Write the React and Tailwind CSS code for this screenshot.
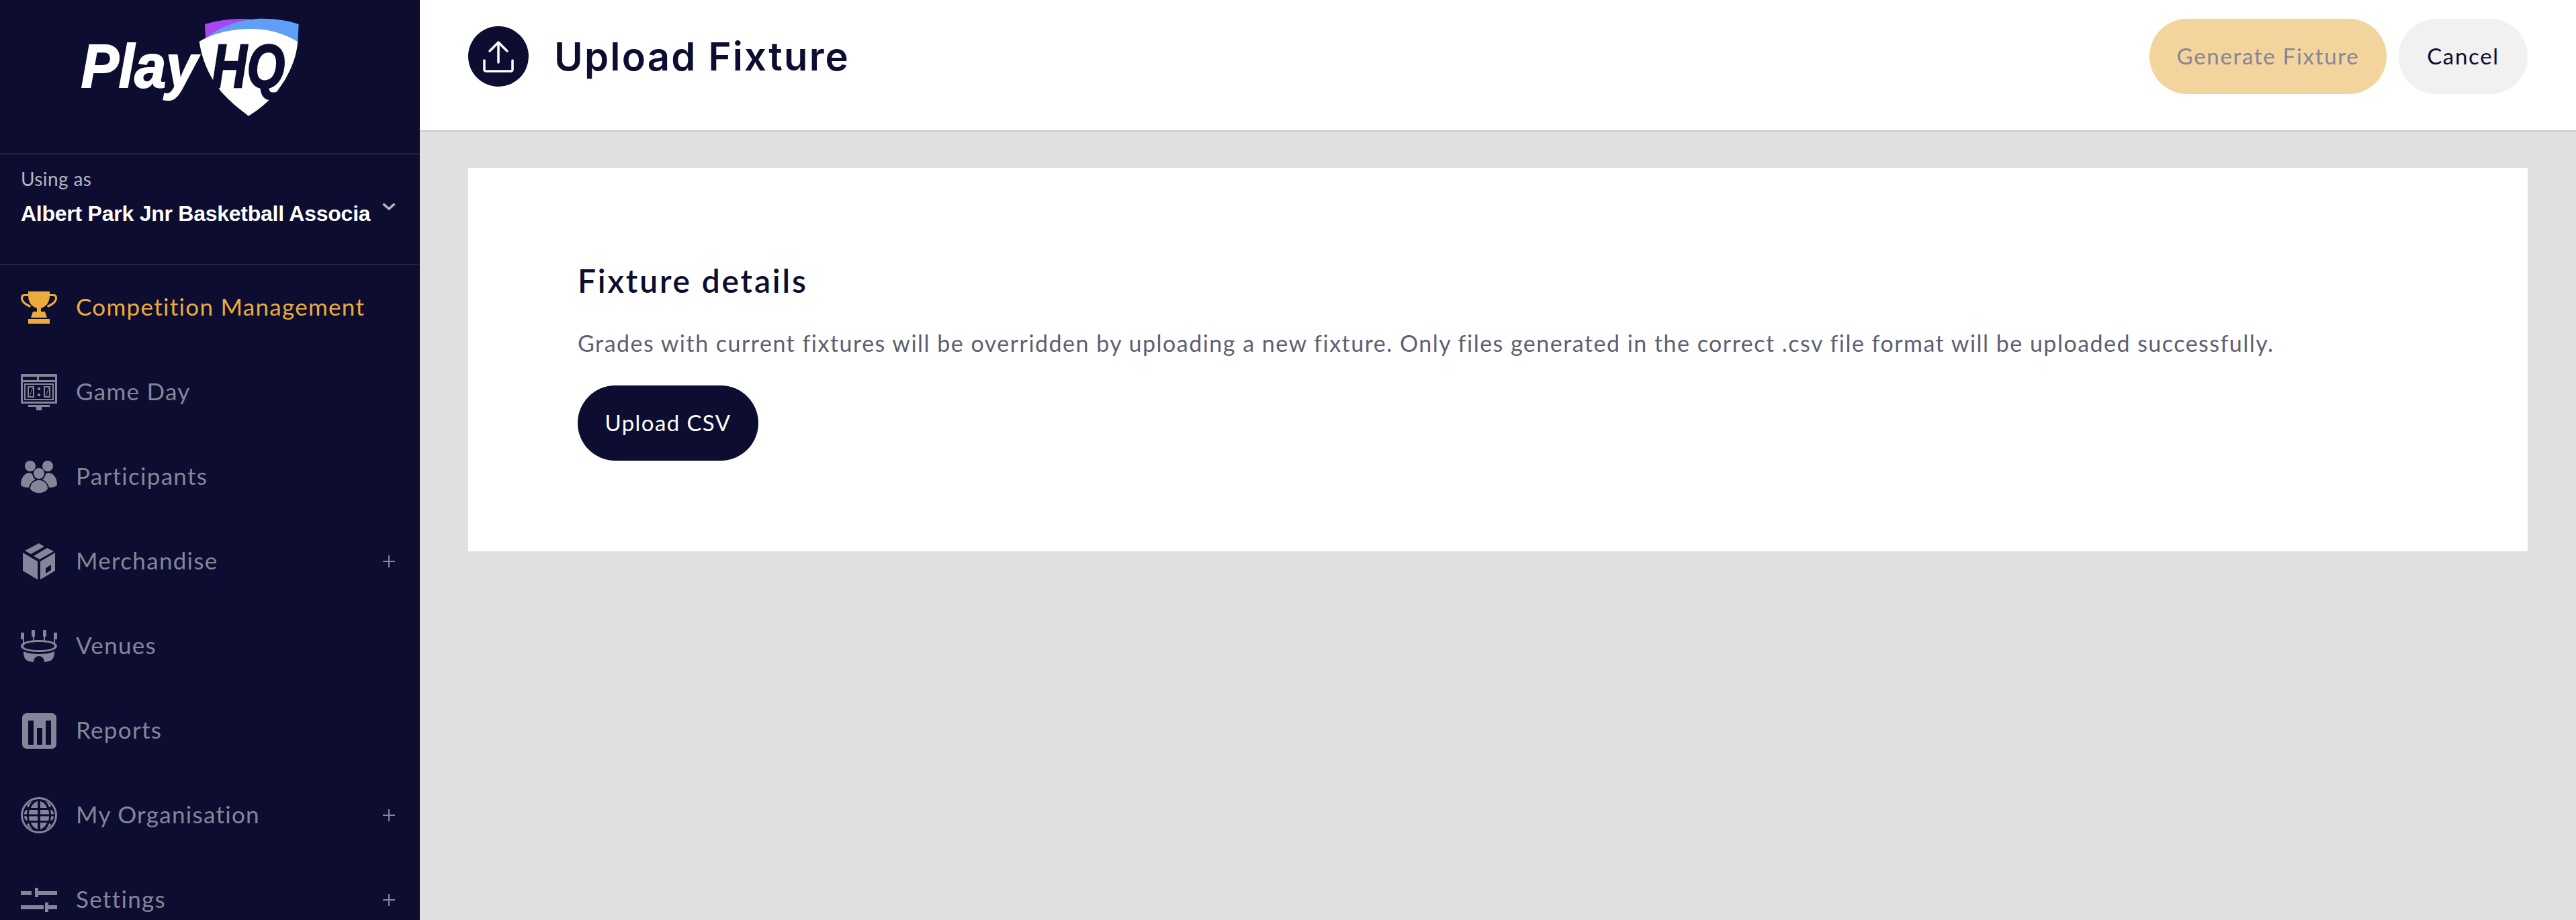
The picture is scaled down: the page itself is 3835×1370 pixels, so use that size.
const navy = '#0c0d30'

const Logo = () => (
  <svg viewBox="0 0 1140 540" className="ml-[90px] mt-[10px] h-[180px] w-[380px]">
    <path d="M645 78C710 58 790 50 850 56L850 84 648 142Z" fill="#a846f0" />
    <path d="M648 142C720 78 830 53 900 53 960 53 1020 62 1064 78L1060 158 850 100Z" fill="#5f9ff7" />
    <path
      d="M620 155C690 115 770 99 850 99 930 99 1000 120 1060 157 1055 220 1030 280 1003 326L972 372C930 425 885 460 840 488 795 455 755 420 718 380L680 325C650 275 628 215 620 155Z"
      fill="#fff"
    />
    <text x="92" y="360" fontFamily="'Liberation Sans', sans-serif" fontWeight="700" fontStyle="italic" fontSize="272" fill="#fff" stroke="#fff" strokeWidth="6" textLength="520" lengthAdjust="spacingAndGlyphs">
      Play
    </text>
    <text x="676" y="360" fontFamily="'Liberation Sans', sans-serif" fontWeight="700" fontStyle="italic" fontSize="272" fill={navy} stroke={navy} strokeWidth="8" textLength="326" lengthAdjust="spacingAndGlyphs">
      HQ
    </text>
  </svg>
)

const Trophy = () => (
  <svg viewBox="0 0 54 48" className="h-[48px] w-[54px]" fill="currentColor">
    <path d="M11 0H43V6C43 17 37 23 30 25V30H36L39 39H15L18 30H24V25C17 23 11 17 11 6Z" />
    <path d="M11 4H5C1 4 0 7 0 10 0 16 6 21 14 24L15 21C8 18 3 14 3 10 3 8 4 7 6 7H11ZM43 4H49C53 4 54 7 54 10 54 16 48 21 40 24L39 21C46 18 51 14 51 10 51 8 50 7 48 7H43Z" />
    <rect x="11" y="41" width="32" height="7" />
  </svg>
)

const Scoreboard = () => (
  <svg viewBox="0 0 54 54" className="h-[54px] w-[54px]" fill="currentColor">
    <path
      fillRule="evenodd"
      d="M1 0H53C53.5 0 54 0.5 54 1V43C54 43.5 53.5 44 53 44H1C0.5 44 0 43.5 0 43V1C0 0.5 0.5 0 1 0ZM3 4V9H24V4ZM27 4V9H51V4ZM3 12V41H51V12ZM5 14H49V39H5ZM7 16V37H47V16Z"
    />
    <path fillRule="evenodd" d="M10 18H20V35H10ZM12 20V33H18V20ZM34 18H44V35H34ZM36 20V33H42V20Z" />
    <path d="M13 32L17 21H18L14 32ZM37 32L41 21H42L38 32Z" />
    <rect x="25" y="20" width="4" height="4" />
    <rect x="25" y="29" width="4" height="4" />
    <rect x="11" y="46" width="32" height="3" />
    <rect x="23" y="49" width="8" height="5" />
  </svg>
)

const People = () => (
  <svg viewBox="0 0 54 48" className="h-[48px] w-[54px]" fill="currentColor">
    <circle cx="14" cy="8" r="8" />
    <circle cx="40" cy="8" r="8" />
    <circle cx="27" cy="19" r="8" />
    <path d="M0 36C0 26 5 19 12 18 14 18 16 19 17 20 18 24 20 27 22 28 17 30 13 35 12 40 6 40 2 39 0 36Z" />
    <path d="M54 36C54 26 49 19 42 18 40 18 38 19 37 20 36 24 34 27 32 28 37 30 41 35 42 40 48 40 52 39 54 36Z" />
    <path d="M14 42C14 34 20 29 27 29 34 29 40 34 40 42 37 46 32 48 27 48 22 48 17 46 14 42Z" />
  </svg>
)

const BoxIcon = () => (
  <svg viewBox="0 0 48 54" className="h-[54px] w-[48px]" fill="currentColor">
    <path d="M24 0L32 5 12 16 3 11ZM36 7L46 12 25 24 16 19 Z" />
    <path fillRule="evenodd" d="M0 14L22 27V54L0 41ZM48 14V41L26 54V27ZM34 37V45L42 40V32Z" />
  </svg>
)

const Stadium = () => (
  <svg viewBox="0 0 54 48" className="h-[48px] w-[54px]" fill="currentColor">
    <rect x="0" y="4" width="5" height="10" />
    <rect x="16" y="0" width="5" height="10" />
    <rect x="33" y="0" width="5" height="10" />
    <rect x="49" y="4" width="5" height="10" />
    <path d="M3 14V20H5V14ZM49 14V20H51V14ZM18 10V16H20V10ZM34 10V16H36V10Z" />
    <path fillRule="evenodd" d="M27 15C40 15 54 18 54 24 54 30 40 33 27 33 14 33 0 30 0 24 0 18 14 15 27 15ZM27 18C15 18 4 20 4 24 4 28 15 30 27 30 39 30 50 28 50 24 50 20 39 18 27 18Z" />
    <path d="M4 32C11 35 19 36 27 36 35 36 43 35 50 32 50 40 48 44 44 46 41 47 38 47.5 35 48 35 43 32 39 27 39 22 39 19 43 19 48 16 47.5 13 47 10 46 6 44 4 40 4 32Z" />
  </svg>
)

const ReportsIcon = () => (
  <svg viewBox="0 0 51 53" className="h-[53px] w-[51px]" fill="currentColor">
    <path fillRule="evenodd" d="M7 0H44C48 0 51 3 51 7V46C51 50 48 53 44 53H7C3 53 0 50 0 46V7C0 3 3 0 7 0ZM9 11V47H17V11ZM22 22V47H30V22ZM35 11V47H43V11Z" />
  </svg>
)

const Globe = () => (
  <svg viewBox="0 0 54 54" className="h-[54px] w-[54px]" fill="currentColor">
    <path fillRule="evenodd" d="M27 0A27 27 0 1 1 27 54 27 27 0 1 1 27 0ZM27 3A24 24 0 1 0 27 51 24 24 0 1 0 27 3Z" />
    <path d="M25 6C20 8 17 11 15 16H25ZM29 6V16H39C37 11 34 8 29 6ZM13 19C12 22 12 24 12 25.5H25V19ZM29 19V25.5H42C42 24 42 22 41 19ZM5 25.5C5 22 7 19 10 19 9.5 22 9 24 9 25.5ZM49 25.5C49 22 47 19 44 19 44.5 22 45 24 45 25.5ZM12 28.5C12 30 12 32 13 35H25V28.5ZM29 28.5V35H41C42 32 42 30 42 28.5ZM5 28.5H9C9 30 9.5 32 10 35 7 35 5 32 5 28.5ZM49 28.5H45C45 30 44.5 32 44 35 47 35 49 32 49 28.5ZM15 38C17 43 20 46 25 48V38ZM29 38V48C34 46 37 43 39 38ZM9 13C10 10 14 7 18 6 15 8 13 11 12 15 10.5 15 9.5 14 9 13ZM45 13C44 10 40 7 36 6 39 8 41 11 42 15 43.5 15 44.5 14 45 13ZM9 41C10 44 14 47 18 48 15 46 13 43 12 39 10.5 39 9.5 40 9 41ZM45 41C44 44 40 47 36 48 39 46 41 43 42 39 43.5 39 44.5 40 45 41Z" />
  </svg>
)

const Sliders = () => (
  <svg viewBox="0 0 54 36" className="h-[36px] w-[54px]" fill="currentColor">
    <rect x="0" y="5" width="16" height="6" />
    <rect x="21" y="0" width="5" height="14" />
    <rect x="26" y="5" width="28" height="6" />
    <rect x="0" y="26" width="34" height="6" />
    <rect x="36" y="22" width="5" height="14" />
    <rect x="41" y="26" width="13" height="6" />
  </svg>
)

const Plus = () => (
  <svg viewBox="0 0 20 20" className="h-[20px] w-[20px]" stroke="currentColor" strokeWidth="2" fill="none">
    <path d="M10 1V19M1 10H19" />
  </svg>
)

const navItems = [
  { label: 'Competition Management', icon: <Trophy />, active: true },
  { label: 'Game Day', icon: <Scoreboard /> },
  { label: 'Participants', icon: <People /> },
  { label: 'Merchandise', icon: <BoxIcon />, expand: true },
  { label: 'Venues', icon: <Stadium /> },
  { label: 'Reports', icon: <ReportsIcon /> },
  { label: 'My Organisation', icon: <Globe />, expand: true },
  { label: 'Settings', icon: <Sliders />, expand: true },
]

const Sidebar = () => (
  <aside className="h-full w-[625px] shrink-0 overflow-hidden bg-[#0c0d30]">
    <div className="box-content h-[228px] overflow-hidden border-b-2 border-[#222342]">
      <Logo />
    </div>
    <div className="box-content h-[145px] border-b-2 border-[#222342] pl-[31px] pr-[36px] pt-[18px]">
      <p className="text-[28px] leading-[36px] tracking-[0.4px] text-[#b6b6c1] [font-family:'Lato',sans-serif]">Using as</p>
      <div className="mt-[15px] flex items-start justify-between">
        <span className="text-[32px] font-bold leading-[38px] tracking-[-0.25px] text-white [font-family:'Liberation_Sans',sans-serif]">
          Albert Park Jnr Basketball Associa
        </span>
        <svg viewBox="0 0 20 11" className="mt-[3px] h-[11px] w-[20px]" fill="none" stroke="#b6b6c1" strokeWidth="3.5">
          <path d="M1.5 1.5L10 9 18.5 1.5" />
        </svg>
      </div>
    </div>
    <nav className="[font-family:'Lato',sans-serif]">
      {navItems.map((item) => (
        <div
          key={item.label}
          className={`flex h-[126px] items-center pl-[31px] pr-[36px] ${item.active ? 'text-[#edab3b]' : 'text-[#85859a]'}`}
        >
          <span className="flex w-[54px] shrink-0 justify-center">{item.icon}</span>
          <span className="ml-[28px] flex-1 pb-[4px] text-[35px] tracking-[1.3px]">{item.label}</span>
          {item.expand && <Plus />}
        </div>
      ))}
    </nav>
  </aside>
)

const Header = () => (
  <header className="flex h-[196px] shrink-0 items-center justify-between border-b-2 border-[#cbcbcb] bg-white px-[72px] pb-[26px]">
    <div className="flex items-center">
      <div className="flex h-[90px] w-[90px] items-center justify-center rounded-full bg-[#0c0d30]">
        <svg viewBox="0 0 90 90" className="h-[90px] w-[90px]" fill="none" stroke="#fff" strokeWidth="3.5" strokeLinecap="round" strokeLinejoin="round">
          <path d="M45 24V54M32 37L45 24 58 37" />
          <path d="M24 51V65C24 66 25 67 26 67H64C65 67 66 66 66 65V51" />
        </svg>
      </div>
      <h1 className="ml-[38px] text-[58px] font-semibold tracking-[2.2px] text-[#0c0d30] [font-family:'Inter',sans-serif]">Upload Fixture</h1>
    </div>
    <div className="flex items-center gap-[18px] text-[33px] [font-family:'Lato',sans-serif]">
      <button className="h-[112px] w-[353px] rounded-full bg-[#f3d49c] tracking-[1.7px] text-[#85859a]">Generate Fixture</button>
      <button className="h-[112px] w-[192px] rounded-full bg-[#f1f1f2] tracking-[1.7px] text-[#0c0d30]">Cancel</button>
    </div>
  </header>
)

export default function App() {
  return (
    <div className="flex h-[1370px] w-[3835px] overflow-hidden bg-[#e0e0e0]">
      <Sidebar />
      <main className="flex min-w-0 flex-1 flex-col">
        <Header />
        <div className="px-[72px] pt-[54px]">
          <section className="h-[571px] bg-white pl-[163px] pt-[138px] [font-family:'Lato',sans-serif]">
            <h2 className="text-[48px] font-semibold leading-[60px] tracking-[2.8px] text-[#0c0d30]">Fixture details</h2>
            <p className="mt-[40px] text-[34px] leading-[46px] tracking-[1.48px] text-[#5f5f73]">
              Grades with current fixtures will be overridden by uploading a new fixture. Only files generated in the correct .csv file format will be uploaded successfully.
            </p>
            <button className="mt-[40px] h-[112px] w-[269px] rounded-full bg-[#0c0d30] text-[33px] tracking-[1.4px] text-white">Upload CSV</button>
          </section>
        </div>
      </main>
    </div>
  )
}
